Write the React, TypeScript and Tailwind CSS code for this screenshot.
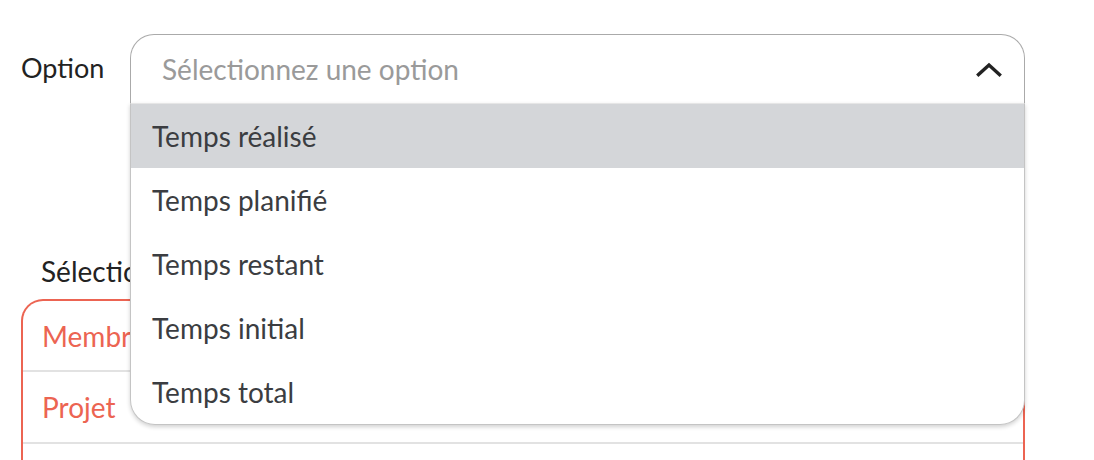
import React from "react";

const items = ["Temps réalisé", "Temps planifié", "Temps restant", "Temps initial", "Temps total"];

export default function App() {
  return (
    <div className="w-[1094px] h-[460px] overflow-hidden bg-white" style={{ fontFamily: "Lato, 'Noto Sans', sans-serif" }}>
      <div className="ml-[21px] w-[1004px] pt-[34px]">
        <div className="flex items-start">
          <div className="w-[109px] h-[69px] flex items-center text-[27px] text-[#222]">Option</div>
          <div className="relative flex-1">
            <div className="h-[69px] border border-b-0 border-[#aaa] rounded-t-[24px] flex items-center justify-between pl-[31px] pr-[22px] bg-white">
              <span className="text-[28px] text-[#9a9a9a]">Sélectionnez une option</span>
              <svg width="26" height="15" viewBox="0 0 26 15" fill="none">
                <polyline points="2.5,12.5 13,3 23.5,12.5" stroke="#222" strokeWidth="3.4" strokeLinecap="square" />
              </svg>
            </div>
            <div className="absolute left-0 right-0 top-full z-10 bg-white border border-[#c4c4c4] border-t-[#e6e6e6] rounded-b-[25px] shadow-[0_2px_4px_rgba(0,0,0,0.18)] overflow-hidden">
              {items.map((t, i) => (
                <div
                  key={t}
                  className={`h-[64px] flex items-center pl-[21px] text-[28px] text-[#3b3d41] ${i === 0 ? "bg-[#d4d6d9]" : ""}`}
                >
                  {t}
                </div>
              ))}
            </div>
          </div>
        </div>
        <div className="mt-[152px] pl-[20px] h-[42px] text-[28px] text-[#222] leading-[32px]">Sélectionnez les colonnes</div>
        <div className="mt-[2px] border-2 border-[#ec6452] rounded-t-[22px] border-b-0">
          <div className="h-[71px] flex items-center pl-[19px] text-[28px] text-[#ec6452] border-b-2 border-[#e2e2e2]">Membre</div>
          <div className="h-[72px] flex items-center pl-[19px] text-[28px] text-[#ec6452] border-b-2 border-[#e2e2e2]">Projet</div>
          <div className="h-[72px]"></div>
        </div>
      </div>
    </div>
  );
}
